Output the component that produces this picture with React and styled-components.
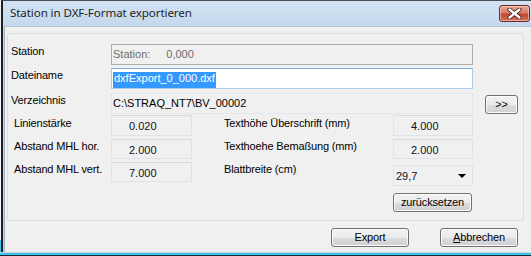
import React from "react";
import styled, { createGlobalStyle } from "styled-components";

const GlobalStyle = createGlobalStyle`
  html, body { margin: 0; padding: 0; background: #ffffff; }
  body { width: 531px; height: 256px; overflow: hidden; }
  * { box-sizing: border-box; }
`;

const Page = styled.div`
  width: 531px;
  height: 256px;
  padding-left: 1px;
  background: linear-gradient(to bottom, #f4f4f4 0, #f4f4f4 240px, #3ec4ec 240px);
`;

const Window = styled.div`
  width: 530px;
  height: 256px;
  border-left: 2px solid #1d1f24;
  border-top: 1px solid #4a5058;
  background: linear-gradient(to bottom, #d3e3f3 0px, #c4d8ed 25px, #bcd2ea 60px);
  display: flex;
  flex-direction: column;
`;

const TitleBar = styled.div`
  height: 25px;
  flex: none;
  display: flex;
  align-items: flex-start;
  justify-content: space-between;
  padding-left: 7px;
  padding-right: 1px;
`;

const Title = styled.span`
  font-family: "Noto Sans", "Open Sans", sans-serif;
  font-size: 11.6px;
  line-height: 14px;
  margin-top: 5px;
  color: #1e1e1e;
  letter-spacing: -0.1px;
`;

const CloseButton = styled.button`
  width: 31px;
  height: 17px;
  margin-top: 4px;
  padding: 0;
  border: 1px solid #6b2a24;
  border-radius: 3px;
  background: linear-gradient(to bottom, #e8a796 0%, #d77c68 45%, #c24a34 55%, #d0705a 100%);
  box-shadow: inset 0 0 0 1px rgba(255, 220, 210, 0.55);
  display: flex;
  align-items: center;
  justify-content: center;
`;

const Client = styled.div`
  flex: 1;
  margin-left: 1px;
  background: #f0f0f0;
  border-left: 1px solid #a7b6c6;
  border-top: 1px solid #b6c6d6;
  display: flex;
  flex-direction: column;
  padding: 6px 0 0 2px;
`;

const GroupBox = styled.div`
  width: 517px;
  height: 188px;
  border: 1px solid #d5dfe5;
  border-radius: 3px;
  display: flex;
  flex-direction: column;
`;

const TopGrid = styled.div`
  display: grid;
  grid-template-columns: 88px 362px 33px;
  grid-template-rows: 21px 22px 21px;
  column-gap: 12px;
  row-gap: 3px;
  padding: 10px 0 0 3px;
`;

const BottomGrid = styled.div`
  display: grid;
  grid-template-columns: 97px 81px 32px 169px 80px;
  grid-template-rows: 21px 20px 20px;
  row-gap: 3px;
  padding: 1px 0 0 6px;
`;

const Label = styled.div`
  font-family: "Liberation Sans", Arial, sans-serif;
  font-size: 11px;
  line-height: 13px;
  letter-spacing: -0.15px;
  color: #000;
  white-space: nowrap;
  padding-top: ${(p) => p.$top || 1}px;
  grid-column: ${(p) => p.$col || "auto"};
`;

const TextField = styled.div`
  height: ${(p) => p.$h || 21}px;
  border: 1px solid ${(p) => p.$border};
  border-top-color: ${(p) => p.$borderTop || p.$border};
  background: ${(p) => p.$bg};
  color: ${(p) => p.$color || "#000"};
  font-family: "Liberation Sans", Arial, sans-serif;
  font-size: 11px;
  line-height: 13px;
  padding: 3px 0 0 1px;
  white-space: nowrap;
  overflow: hidden;
  display: flex;
`;

const Selected = styled.span`
  background: #3399ff;
  color: #fff;
  padding: 0 1px;
`;

const Gap = styled.span`
  display: inline-block;
  width: ${(p) => p.$w}px;
`;

const ValueField = styled.div`
  height: ${(p) => p.$h || 20}px;
  grid-column: ${(p) => p.$col || "auto"};
  border: 1px solid #e2e3e6;
  border-top-color: #d9dadd;
  background: #f0f0f0;
  font-family: "Liberation Sans", Arial, sans-serif;
  font-size: 11px;
  line-height: 13px;
  color: #111126;
  padding: 4px 0 0 17px;
`;

const Combo = styled.div`
  grid-column: 5;
  height: 21px;
  margin-top: 3px;
  border: 1px solid #e2e3e6;
  background: #f0f0f0;
  font-family: "Liberation Sans", Arial, sans-serif;
  font-size: 11px;
  line-height: 13px;
  color: #111126;
  padding: 4px 0 0 2px;
  display: flex;
  justify-content: space-between;
`;

const Arrow = styled.span`
  width: 0;
  height: 0;
  margin: 4px 6px 0 0;
  border-left: 4px solid transparent;
  border-right: 4px solid transparent;
  border-top: 4px solid #000;
`;

const PushButton = styled.button`
  width: ${(p) => p.$w}px;
  height: ${(p) => p.$h || 19}px;
  margin-top: ${(p) => p.$mt || 0}px;
  padding: 0;
  border: 1px solid #707070;
  border-radius: 3px;
  background: linear-gradient(to bottom, #f2f2f2 0%, #ebebeb 50%, #dddddd 51%, #cfcfcf 100%);
  box-shadow: inset 0 0 0 1px #fcfcfc;
  font-family: "Liberation Sans", Arial, sans-serif;
  font-size: 11px;
  line-height: 13px;
  letter-spacing: -0.15px;
  color: #000;
  display: flex;
  align-items: center;
  justify-content: center;
`;

const ResetRow = styled.div`
  display: flex;
  justify-content: flex-end;
  padding: 0 51px 0 0;
  margin-top: 11px;
`;

const Footer = styled.div`
  display: flex;
  justify-content: flex-end;
  gap: 31px;
  padding-right: 13px;
  margin-top: 7px;
`;

const BottomFrame = styled.div`
  height: 4px;
  flex: none;
  margin-left: -3px;
  border-top: 1px solid #c7d0d8;
  background: linear-gradient(to bottom, #3ec4ec 0, #3ec4ec 2px, #15293a 2px);
`;

const Underline = styled.span`
  text-decoration: underline;
`;

const CloseIcon = () => (
  <svg width="15" height="11" viewBox="0 0 15 11">
    <path
      d="M2.5 1.5 L12.5 9.5 M12.5 1.5 L2.5 9.5"
      stroke="#3a1410"
      strokeWidth="4"
      strokeLinecap="round"
    />
    <path
      d="M2.5 1.5 L12.5 9.5 M12.5 1.5 L2.5 9.5"
      stroke="#ffffff"
      strokeWidth="2.4"
      strokeLinecap="round"
    />
  </svg>
);

export default function App() {
  return (
    <>
      <GlobalStyle />
      <Page>
        <Window>
          <TitleBar>
            <Title>Station in DXF-Format exportieren</Title>
            <CloseButton aria-label="Schließen">
              <CloseIcon />
            </CloseButton>
          </TitleBar>
          <Client>
            <GroupBox>
              <TopGrid>
                <Label>Station</Label>
                <TextField $border="#adadad" $bg="#f0f0f0" $color="#6d6d6d">
                  Station:<Gap $w={16} />0,000
                </TextField>
                <span />
                <Label>Dateiname</Label>
                <TextField $border="#a9cbea" $borderTop="#7eb0dc" $bg="#ffffff">
                  <Selected>dxfExport_0_000.dxf</Selected>
                </TextField>
                <span />
                <Label>Verzeichnis</Label>
                <TextField $border="#e3e7ec" $bg="#f0f0f0">
                  C:\STRAQ_NT7\BV_00002
                </TextField>
                <PushButton $w={33} $mt={2}>&gt;&gt;</PushButton>
              </TopGrid>
              <BottomGrid>
                <Label $col={1} $top={2}>Linienstärke</Label>
                <ValueField $h={21}>0.020</ValueField>
                <Label $col={4} $top={2}>Texthöhe Überschrift (mm)</Label>
                <ValueField $col={5} $h={21}>4.000</ValueField>
                <Label $col={1}>Abstand MHL hor.</Label>
                <ValueField>2.000</ValueField>
                <Label $col={4}>Texthoehe Bemaßung (mm)</Label>
                <ValueField $col={5}>2.000</ValueField>
                <Label $col={1}>Abstand MHL vert.</Label>
                <ValueField>7.000</ValueField>
                <Label $col={4}>Blattbreite (cm)</Label>
                <Combo>
                  29,7
                  <Arrow />
                </Combo>
              </BottomGrid>
              <ResetRow>
                <PushButton $w={79}>zurücksetzen</PushButton>
              </ResetRow>
            </GroupBox>
            <Footer>
              <PushButton $w={78}>Export</PushButton>
              <PushButton $w={78}>
                <Underline>A</Underline>bbrechen
              </PushButton>
            </Footer>
          </Client>
          <BottomFrame />
        </Window>
      </Page>
    </>
  );
}
